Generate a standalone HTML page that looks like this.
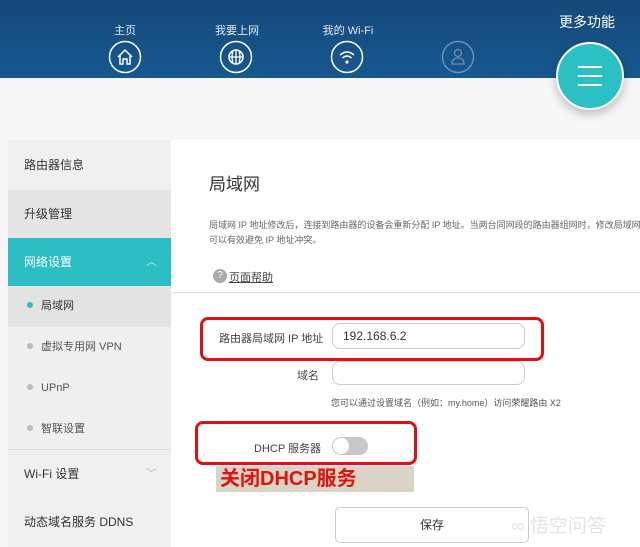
<!DOCTYPE html>
<html><head><meta charset="utf-8"><style>
*{margin:0;padding:0;box-sizing:border-box}
body{width:640px;height:547px;overflow:hidden;background:#f7f7f7;font-family:"Liberation Sans","Noto Sans CJK SC",sans-serif;position:relative;color:#333}
.hdr{position:absolute;left:0;top:0;width:640px;height:78px;background:linear-gradient(#15497a,#175890)}
.nav{position:absolute;color:#dfe8f2;font-size:11px;text-align:center;width:80px}
.ic{position:absolute;width:34px;height:34px}
.more{position:absolute;left:559px;top:12px;color:#fff;font-size:14px}
.fab{position:absolute;left:556px;top:42px;width:68px;height:68px;border-radius:50%;background:#2bc1c4;border:2px solid #fff;box-shadow:0 4px 10px rgba(0,0,0,.25)}
.fab i{position:absolute;left:20px;width:24px;height:2px;background:#fff}
.side{position:absolute;left:8px;top:140px;width:163px}
.side div{position:relative;font-size:12px;padding-left:16px}
.dot{display:inline-block;width:6px;height:6px;border-radius:50%;background:#bbb;margin-right:8px;vertical-align:1px}
.panel{position:absolute;left:171px;top:140px;width:469px;height:407px;background:#fff}
.inp{position:absolute;border:1px solid #ccc;border-radius:8px;background:#fff}
.red{position:absolute;border:3px solid #e01010;border-radius:8px}
</style></head><body>
<div class="hdr">
 <div class="nav" style="left:85px;top:22px">主页</div>
 <div class="nav" style="left:197px;top:22px">我要上网</div>
 <div class="nav" style="left:308px;top:22px">我的 Wi-Fi</div>
 <svg class="ic" style="left:108px;top:40px" viewBox="0 0 34 34"><circle cx="17" cy="17" r="15.5" fill="none" stroke="#fff" stroke-width="1.5"/><path d="M10 17 L17 10 L24 17 M12 15 V24 H15 V19 H19 V24 H22 V15" fill="none" stroke="#fff" stroke-width="1.5"/></svg>
 <svg class="ic" style="left:219px;top:40px" viewBox="0 0 34 34"><circle cx="17" cy="17" r="15.5" fill="none" stroke="#fff" stroke-width="1.5"/><circle cx="17" cy="17" r="7" fill="none" stroke="#fff" stroke-width="1.5"/><path d="M10 17H24M17 10V24M14 11Q12 17 14 23M20 11Q22 17 20 23" fill="none" stroke="#fff" stroke-width="1.3"/></svg>
 <svg class="ic" style="left:330px;top:40px" viewBox="0 0 34 34"><circle cx="17" cy="17" r="15.5" fill="none" stroke="#fff" stroke-width="1.5"/><path d="M10 15Q17 9 24 15M12.5 18Q17 14 21.5 18" fill="none" stroke="#fff" stroke-width="1.5"/><circle cx="17" cy="22" r="1.6" fill="#fff"/></svg>
 <svg class="ic" style="left:441px;top:40px;opacity:.35" viewBox="0 0 34 34"><circle cx="17" cy="17" r="15.5" fill="none" stroke="#fff" stroke-width="1.5"/><circle cx="17" cy="13" r="3.5" fill="none" stroke="#fff" stroke-width="1.3"/><path d="M11 24Q11 18 17 18Q23 18 23 24Z" fill="none" stroke="#fff" stroke-width="1.3"/></svg>
 <div class="more">更多功能</div>
</div>
<div class="fab"><i style="top:22px"></i><i style="top:31px"></i><i style="top:40px"></i></div>
<div class="side">
 <div style="height:50px;line-height:50px;background:#f0f0f0">路由器信息</div>
 <div style="height:48px;line-height:48px;background:#e5e5e5">升级管理</div>
 <div style="height:48px;line-height:48px;background:#2cbec3;color:#fff">网络设置<span style="position:absolute;right:14px;top:0;font-size:11px;color:#bfeff0">︿</span></div>
 <div style="height:41px;line-height:41px;background:#e3e3e3;font-size:11px;padding-left:19px"><span class="dot" style="background:#2cbec3"></span>局域网</div>
 <div style="height:41px;line-height:41px;background:#efefef;font-size:11px;padding-left:19px;color:#555"><span class="dot"></span>虚拟专用网 VPN</div>
 <div style="height:41px;line-height:41px;background:#efefef;font-size:11px;padding-left:19px;color:#555"><span class="dot"></span>UPnP</div>
 <div style="height:41px;line-height:41px;background:#efefef;font-size:11px;padding-left:19px;color:#555;border-bottom:1px solid #ddd"><span class="dot"></span>智联设置</div>
 <div style="height:48px;line-height:48px;background:#f0f0f0">Wi-Fi 设置<span style="position:absolute;right:14px;top:0;font-size:11px;color:#bbb">﹀</span></div>
 <div style="height:49px;line-height:49px;background:#f0f0f0">动态域名服务 DDNS</div>
</div>
<div class="panel">
 <div style="position:absolute;left:38px;top:30px;font-size:17px;color:#333">局域网</div>
 <div style="position:absolute;left:38px;top:78px;font-size:9px;color:#666;line-height:15px;white-space:nowrap">局域网 IP 地址修改后，连接到路由器的设备会重新分配 IP 地址。当两台同网段的路由器组网时，修改局域网 I<br>可以有效避免 IP 地址冲突。</div>
 <div style="position:absolute;left:42px;top:129px;width:14px;height:14px;border-radius:50%;background:#aaa;color:#fff;font-size:10px;text-align:center;line-height:14px">?</div>
 <div style="position:absolute;left:58px;top:129px;font-size:11px;color:#444;text-decoration:underline">页面帮助</div>
 <div style="position:absolute;left:0;top:152px;width:469px;height:1px;background:#ddd"></div>
 <div style="position:absolute;left:48px;top:190px;font-size:11px;color:#444">路由器局域网 IP 地址</div>
 <div class="inp" style="left:161px;top:183px;width:193px;height:26px;font-size:12px;line-height:24px;padding-left:10px;color:#333">192.168.6.2</div>
 <div style="position:absolute;left:126px;top:227px;font-size:11px;color:#444">域名</div>
 <div class="inp" style="left:161px;top:221px;width:193px;height:24px"></div>
 <div style="position:absolute;left:160px;top:256px;font-size:9px;color:#555">您可以通过设置域名（例如：my.home）访问荣耀路由 X2</div>
 <div style="position:absolute;left:83px;top:300px;font-size:11px;color:#444">DHCP 服务器</div>
 <div style="position:absolute;left:161px;top:297px;width:36px;height:18px;border-radius:9px;background:#c8c8c8"><div style="position:absolute;left:1px;top:1px;width:16px;height:16px;border-radius:50%;background:#fff"></div></div>
 <div style="position:absolute;left:45px;top:326px;width:198px;height:26px;background:#d9d4c6;color:#e0140f;font-weight:bold;font-size:20px;line-height:26px;padding-left:4px;white-space:nowrap">关闭DHCP服务</div>
 <div class="inp" style="left:164px;top:367px;width:194px;height:36px;border-radius:5px;font-size:12px;text-align:center;line-height:34px">保存</div>
 <div style="position:absolute;left:340px;top:371px;font-size:19px;color:rgba(210,210,210,.6)">∞ 悟空问答</div>
</div>
<div class="red" style="left:200px;top:317px;width:344px;height:44px"></div>
<div class="red" style="left:195px;top:421px;width:222px;height:44px"></div>
</body></html>
